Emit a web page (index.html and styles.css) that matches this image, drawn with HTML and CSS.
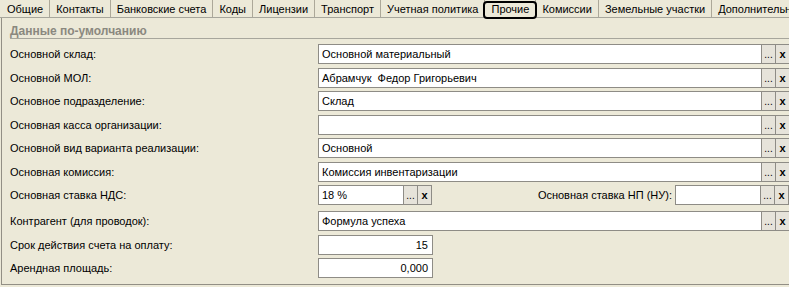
FILE: index.html
```html
<!DOCTYPE html>
<html lang="ru">
<head>
<meta charset="utf-8">
<link rel="stylesheet" href="styles.css">
</head>
<body>
<div class="tabs">
  <div class="tab first">Общие</div>
  <div class="tab">Контакты</div>
  <div class="tab">Банковские счета</div>
  <div class="tab">Коды</div>
  <div class="tab">Лицензии</div>
  <div class="tab">Транспорт</div>
  <div class="tab">Учетная политика</div>
  <div class="tab active">Прочие</div>
  <div class="tab">Комиссии</div>
  <div class="tab">Земельные участки</div>
  <div class="tab last">Дополнительн</div>
</div>
<div class="panel">
  <div class="group-title">Данные по-умолчанию</div>
  <div class="row">
    <div class="label">Основной склад:</div>
    <div class="field wide"><div class="value">Основной материальный</div><div class="btn dots">...</div><div class="btn clear">x</div></div>
  </div>
  <div class="row">
    <div class="label">Основной МОЛ:</div>
    <div class="field wide"><div class="value">Абрамчук&nbsp; Федор Григорьевич</div><div class="btn dots">...</div><div class="btn clear">x</div></div>
  </div>
  <div class="row">
    <div class="label">Основное подразделение:</div>
    <div class="field wide"><div class="value">Склад</div><div class="btn dots">...</div><div class="btn clear">x</div></div>
  </div>
  <div class="row">
    <div class="label">Основная касса организации:</div>
    <div class="field wide"><div class="value"></div><div class="btn dots">...</div><div class="btn clear">x</div></div>
  </div>
  <div class="row">
    <div class="label">Основной вид варианта реализации:</div>
    <div class="field wide"><div class="value">Основной</div><div class="btn dots">...</div><div class="btn clear">x</div></div>
  </div>
  <div class="row">
    <div class="label">Основная комиссия:</div>
    <div class="field wide"><div class="value">Комиссия инвентаризации</div><div class="btn dots">...</div><div class="btn clear">x</div></div>
  </div>
  <div class="row">
    <div class="label">Основная ставка НДС:</div>
    <div class="field short"><div class="value">18 %</div><div class="btn dots">...</div><div class="btn clear">x</div></div>
    <div class="label-right">Основная ставка НП (НУ):</div>
    <div class="field np"><div class="value"></div><div class="btn dots">...</div><div class="btn clear">x</div></div>
  </div>
  <div class="row gap">
    <div class="label">Контрагент (для проводок):</div>
    <div class="field wide"><div class="value">Формула успеха</div><div class="btn dots">...</div><div class="btn clear">x</div></div>
  </div>
  <div class="row">
    <div class="label">Срок действия счета на оплату:</div>
    <div class="field num"><div class="value right">15</div></div>
  </div>
  <div class="row">
    <div class="label">Арендная площадь:</div>
    <div class="field num"><div class="value right">0,000</div></div>
  </div>
</div>
</body>
</html>
```
FILE: styles.css
```css
html, body {
  margin: 0;
  padding: 0;
}
body {
  background: #ece9d8;
  font-family: "Liberation Sans", Arial, sans-serif;
  font-size: 11px;
  color: #000;
  width: 789px;
  height: 287px;
  overflow: hidden;
}
.tabs {
  display: flex;
  height: 17px;
  border-bottom: 1px solid #a7a69c;
  white-space: nowrap;
  overflow: visible;
}
.tab {
  position: relative;
  line-height: 18px;
  padding: 0 6px;
  border-right: 1px solid #aca899;
  flex: none;
}
.tab.first {
  padding-left: 7px;
}
.tab.last {
  border-right: none;
  padding-right: 0;
}
.tab.active::after {
  content: "";
  position: absolute;
  left: -2px;
  right: -2px;
  top: 1px;
  bottom: -2px;
  border: 2px solid #000;
  border-radius: 4px;
}
.panel {
  margin-left: 1px;
  height: 267px;
  border-left: 1px solid #928f85;
  border-bottom: 1px solid #928f85;
  padding-left: 8px;
  box-sizing: border-box;
  overflow: hidden;
}
.group-title {
  font-weight: bold;
  font-size: 12px;
  color: #8a887f;
  padding-top: 6px;
  line-height: 14px;
  border-bottom: 1px solid #a7a69c;
}
.row {
  display: flex;
  align-items: center;
  height: 20px;
  margin-top: 3.5px;
  white-space: nowrap;
}
.group-title + .row {
  margin-top: 5px;
}
.row.gap {
  margin-top: 6px;
}
.label {
  width: 308px;
  flex: none;
}
.label-right {
  flex: 1;
  text-align: right;
  padding-right: 3px;
}
.field {
  display: flex;
  height: 20px;
  box-sizing: border-box;
  border: 1px solid #8e8c86;
  flex: none;
}
.field.wide {
  width: 472px;
}
.field.short {
  width: 114px;
}
.field.np {
  width: 114px;
}
.field.num {
  width: 115px;
}
.value {
  flex: 1;
  background: #fff;
  padding: 0 3px;
  line-height: 18px;
  overflow: hidden;
}
.value.right {
  text-align: right;
  padding-right: 4px;
}
.btn {
  width: 13px;
  flex: none;
  border-left: 1px solid #8e8c86;
  background: #e6e3da;
  text-align: center;
  line-height: 18px;
}
.btn.dots {
  font-size: 10px;
  line-height: 20px;
}
.btn.clear {
  font-weight: bold;
  font-size: 11px;
}
```
